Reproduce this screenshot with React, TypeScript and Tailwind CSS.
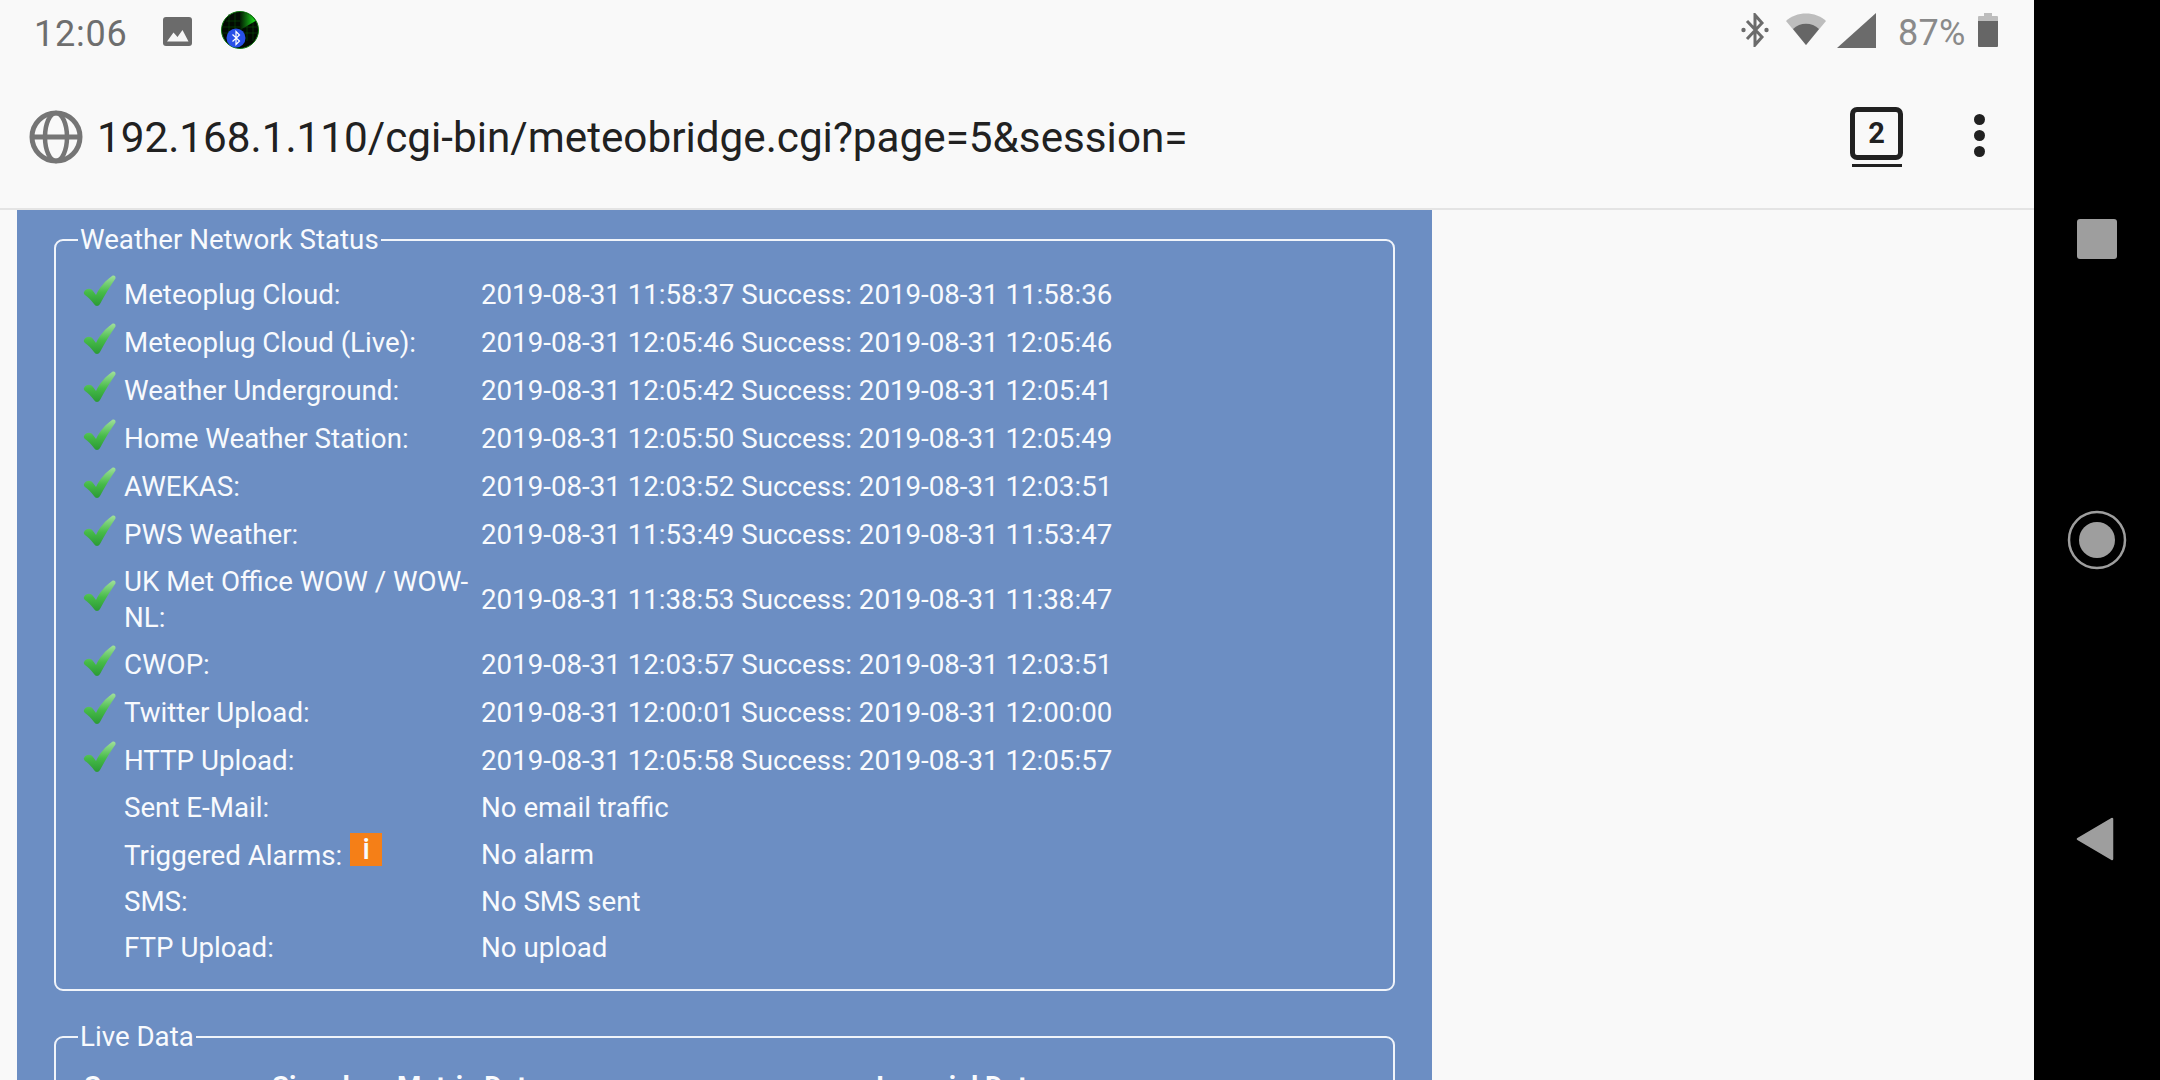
import React from "react";

const font = { fontFamily: "Roboto, sans-serif" };

function Check() {
  return (
    <svg width="34" height="32" viewBox="0 0 34 32" className="shrink-0">
      <defs>
        <linearGradient id="chk" x1="0" y1="0" x2="0" y2="1">
          <stop offset="0" stopColor="#a0e09a" />
          <stop offset="0.55" stopColor="#46bb48" />
          <stop offset="1" stopColor="#2b9a35" />
        </linearGradient>
      </defs>
      <path d="M1 17 C3 13 8 13 10 16 L13 20 C17 12 22 6 29 1 C31 0 33 1 32.5 3.5 C27 11 22 20 17 29 C15.5 31.5 12.5 31.5 11 29 C8 25 5 22 2 20 C1 19 0.5 18 1 17Z" fill="url(#chk)" />
    </svg>
  );
}

type Row = { label: React.ReactNode; value: string; ok?: boolean; h: number };

const rows: Row[] = [
  { label: "Meteoplug Cloud:", value: "2019-08-31 11:58:37 Success: 2019-08-31 11:58:36", ok: true, h: 48 },
  { label: "Meteoplug Cloud (Live):", value: "2019-08-31 12:05:46 Success: 2019-08-31 12:05:46", ok: true, h: 48 },
  { label: "Weather Underground:", value: "2019-08-31 12:05:42 Success: 2019-08-31 12:05:41", ok: true, h: 48 },
  { label: "Home Weather Station:", value: "2019-08-31 12:05:50 Success: 2019-08-31 12:05:49", ok: true, h: 48 },
  { label: "AWEKAS:", value: "2019-08-31 12:03:52 Success: 2019-08-31 12:03:51", ok: true, h: 48 },
  { label: "PWS Weather:", value: "2019-08-31 11:53:49 Success: 2019-08-31 11:53:47", ok: true, h: 48 },
  { label: <>UK Met Office WOW / WOW-<br />NL:</>, value: "2019-08-31 11:38:53 Success: 2019-08-31 11:38:47", ok: true, h: 82 },
  { label: "CWOP:", value: "2019-08-31 12:03:57 Success: 2019-08-31 12:03:51", ok: true, h: 48 },
  { label: "Twitter Upload:", value: "2019-08-31 12:00:01 Success: 2019-08-31 12:00:00", ok: true, h: 48 },
  { label: "HTTP Upload:", value: "2019-08-31 12:05:58 Success: 2019-08-31 12:05:57", ok: true, h: 48 },
  { label: "Sent E-Mail:", value: "No email traffic", h: 46 },
  {
    label: (
      <span className="flex items-start">
        <span className="mt-[3px]">Triggered Alarms:</span>
        <span className="ml-[8px] -mt-[2px] w-[32px] h-[33px] bg-[#f57f17] flex items-center justify-center text-[29px] font-medium leading-none">i</span>
      </span>
    ),
    value: "No alarm",
    h: 47,
  },
  { label: "SMS:", value: "No SMS sent", h: 48 },
  { label: "FTP Upload:", value: "No upload", h: 44 },
];

export default function App() {
  return (
    <div className="flex w-[2160px] h-[1080px] overflow-hidden bg-black" style={font}>
      <div className="w-[2034px] h-full flex flex-col bg-[#f9f9f9]">
        {/* status bar */}
        <div className="h-[62px] flex items-center pl-[34px] pr-[36px] shrink-0">
          <span className="text-[36px] text-[#6e6e6e] leading-none tracking-[0.8px] w-[129px] mt-[5px]">12:06</span>
          <svg width="29" height="29" viewBox="0 0 29 29">
            <rect width="29" height="29" rx="3" fill="#6b6b6b" />
            <path d="M4 24.5 L10.5 15.5 L14.5 20 L19.5 13 L25.5 24.5Z" fill="#f7f7f7" />
          </svg>
          <svg width="38" height="38" viewBox="0 0 38 38" className="ml-[29px] -mt-[2px]">
            <defs>
              <linearGradient id="sweep" x1="0" y1="0" x2="1" y2="0">
                <stop offset="0" stopColor="#021a02" />
                <stop offset="1" stopColor="#1ee01e" />
              </linearGradient>
            </defs>
            <circle cx="19" cy="19" r="18.5" fill="#020a02" stroke="#0f7a0f" strokeWidth="1" />
            <path d="M5 10H33M2 16H36M2 22H36M8 3V30M14 1V30M20 1V30M26 2V30M32 6V30" stroke="#064f06" strokeWidth="0.6" />
            <path d="M19 19 L19 1 C25 1 31 4 34.5 10Z" fill="url(#sweep)" />
            <circle cx="15" cy="27" r="9.5" fill="#2850e8" />
            <path d="M11.5 23.5l7 6.5-3.5 3.5v-13l3.5 3.5-7 6.5" stroke="#fff" strokeWidth="1.2" fill="none" />
          </svg>
          <div className="flex-1" />
          <svg width="28" height="34" viewBox="0 0 28 34" className="-mt-[2px]">
            <path d="M6 8l15 16-7 8V2l7 8L6 26" stroke="#6b6b6b" strokeWidth="3" fill="none" />
            <circle cx="2.5" cy="17" r="2.2" fill="#6b6b6b" />
            <circle cx="25.5" cy="17" r="2.2" fill="#6b6b6b" />
          </svg>
          <svg width="40" height="32" viewBox="0 0 40 32" className="ml-[17px] -mt-[4px]">
            <path d="M0 8C10-2 30-2 40 8L20 32Z" fill="#bdbdbd" />
            <path d="M7 16C14 9 26 9 33 16L20 32Z" fill="#666" />
          </svg>
          <svg width="39" height="35" viewBox="0 0 39 35" className="ml-[11px] -mt-[2px]">
            <path d="M39 0V35H0Z" fill="#6b6b6b" />
          </svg>
          <span className="ml-[22px] w-[69px] text-[36px] text-[#8a8a8a] leading-none mt-[4px] tracking-[0.3px]">87%</span>
          <svg width="20" height="34" viewBox="0 0 20 34" className="ml-[11px] -mt-[2px]">
            <path d="M6 0h8v3h5a1 1 0 0 1 1 1v7H0V4a1 1 0 0 1 1-1h5Z" fill="#bdbdbd" />
            <path d="M0 8h20v25a1 1 0 0 1-1 1H1a1 1 0 0 1-1-1Z" fill="#666" />
          </svg>
        </div>
        {/* url bar */}
        <div className="h-[146px] flex items-center pl-[29px] shrink-0">
          <svg width="54" height="54" viewBox="0 0 54 54" className="mt-[3px]">
            <circle cx="27" cy="27" r="24" fill="none" stroke="#757575" strokeWidth="5" />
            <ellipse cx="27" cy="27" rx="11" ry="24" fill="none" stroke="#757575" strokeWidth="4.5" />
            <path d="M3 27H51" stroke="#757575" strokeWidth="5" />
          </svg>
          <span className="ml-[14px] text-[42.24px] text-[#212121] leading-none whitespace-nowrap mt-[6px]">192.168.1.110/cgi-bin/meteobridge.cgi?page=5&amp;session=</span>
          <div className="flex-1" />
          <div className="flex flex-col items-center w-[53px] mr-[71px] mt-[3px]">
            <div className="w-[53px] h-[53px] border-[5px] border-[#212121] rounded-[7px] flex items-center justify-center text-[29px] font-bold text-[#212121] leading-none">2</div>
            <div className="w-[50px] h-[3px] bg-[#212121] mt-[4px]" />
          </div>
          <div className="flex flex-col gap-[5px] mr-[49px] mt-[1px]">
            <div className="w-[11px] h-[11px] rounded-full bg-[#212121]" />
            <div className="w-[11px] h-[11px] rounded-full bg-[#212121]" />
            <div className="w-[11px] h-[11px] rounded-full bg-[#212121]" />
          </div>
        </div>
        <div className="h-[2px] bg-[#e4e4e4] shrink-0" />
        {/* page */}
        <div className="flex-1 overflow-hidden pl-[17px]">
          <div className="w-[1415px] min-h-full bg-[#6c8ec3] pt-[15px] px-[37px] text-[#f8fafd] text-[27.7px]">
            <fieldset className="border-2 border-[#f0f4fa] rounded-[9px] pl-[28px] h-[766px] block">
              <legend className="px-[2px] -ml-[6px] leading-[30px]">Weather Network Status</legend>
              <div className="pt-[16px]">
                {rows.map((r, i) => (
                  <div key={i} className="flex items-center" style={{ height: r.h }}>
                    <div className="w-[41px] shrink-0 -mt-[8px] -ml-[1px]">{r.ok && <Check />}</div>
                    <div className="w-[357px] shrink-0 leading-[36px]">{r.label}</div>
                    <div className="whitespace-nowrap">{r.value}</div>
                  </div>
                ))}
              </div>
            </fieldset>
            <fieldset className="border-2 border-[#f0f4fa] rounded-[9px] pl-[28px] h-[200px] mt-[31px] block">
              <legend className="px-[2px] -ml-[6px] leading-[30px]">Live Data</legend>
              <div className="flex font-bold pt-[20px] leading-[30px]">
                <span className="w-[188px]">Sensor</span>
                <span className="w-[125px]">Signal</span>
                <span className="w-[479px]">Metric Data</span>
                <span>Imperial Data</span>
              </div>
            </fieldset>
          </div>
        </div>
      </div>
      {/* nav bar */}
      <div className="w-[126px] h-full bg-black flex flex-col items-center shrink-0">
        <div className="w-[40px] h-[40px] mt-[219px] rounded-[3px] bg-[#9e9e9e]" />
        <svg width="60" height="60" viewBox="0 0 60 60" className="mt-[251px]">
          <circle cx="30" cy="30" r="28" fill="none" stroke="#9e9e9e" strokeWidth="2.5" />
          <circle cx="30" cy="30" r="18" fill="#9e9e9e" />
        </svg>
        <svg width="40" height="44" viewBox="0 0 40 44" className="mt-[247px] mr-[4px]">
          <path d="M3 22 L37 2 V42 Z" fill="#9e9e9e" stroke="#9e9e9e" strokeWidth="2.5" strokeLinejoin="round" />
        </svg>
      </div>
    </div>
  );
}
